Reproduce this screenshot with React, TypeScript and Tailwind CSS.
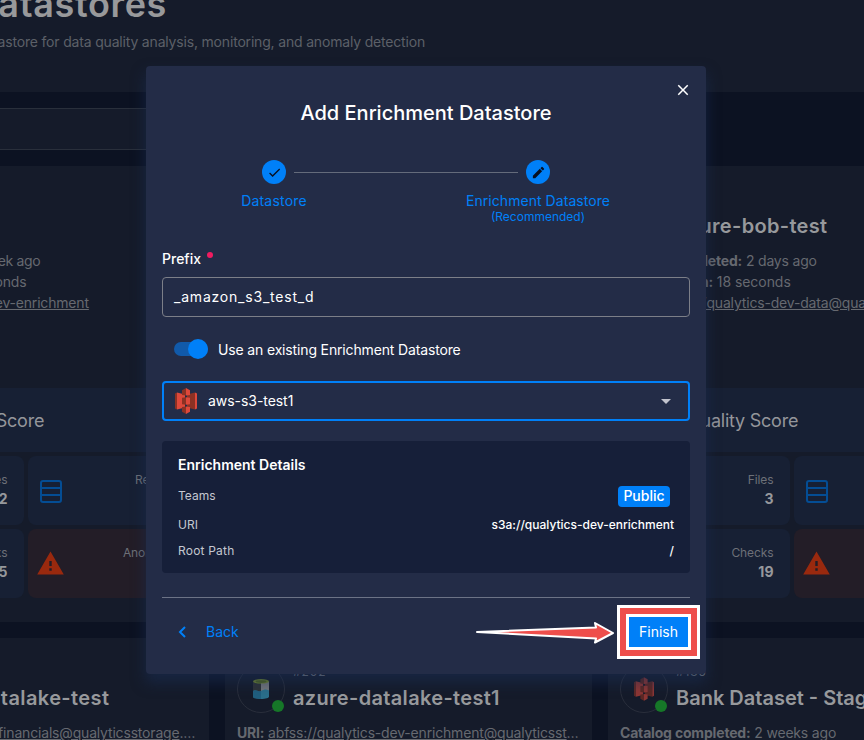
import { ReactNode } from "react";
import { MdCheck, MdEdit, MdClose, MdArrowDropDown, MdWarning } from "react-icons/md";

function S3Icon({ className }: { className: string }) {
  return (
    <svg viewBox="0 0 22 26" className={className}>
      <path d="M0 5.500 2 4.500v17l-2-1z" fill="#8c3123" />
      <path d="M2 4.500 10 6.500v13L2 21.500z" fill="#dd483b" />
      <path d="M22 5.500 20 4.500v17l2-1z" fill="#dd483b" />
      <path d="M20 4.500 12 6.500v13l8 2z" fill="#8c3123" />
      <path d="M7 2.200 11 0v7.500L7 7z" fill="#8c3123" />
      <path d="M15 2.200 11 0v7.500l4-.5z" fill="#dd483b" />
      <path d="M7 23.800 11 26v-7.500l-4 .5z" fill="#8c3123" />
      <path d="M15 23.800 11 26v-7.500l4 .5z" fill="#dd483b" />
      <path d="M7 9.800 11 9.300v7.500l-4-.6z" fill="#8c3123" />
      <path d="M15 9.800 11 9.300v7.500l4-.6z" fill="#dd483b" />
    </svg>
  );
}

function LakeIcon() {
  return (
    <svg viewBox="0 0 16 20" className="h-5 w-4">
      <path d="M0 2.500h8V19c-4 0-8-.5-8-2z" fill="#2e3236" />
      <path d="M8 2.500h8V17c0 1.500-4 2-8 2z" fill="#74777c" />
      <path d="M0 12c3-2 5 1.500 8 0s5-2 8-.5V17.500c0 1.500-3 2.500-8 2.500s-8-1-8-2.500z" fill="#2b6f8b" />
      <path d="M0 12c3-2 5 1.500 8 0v8c-5 0-8-1-8-2.500z" fill="#205f7f" />
      <ellipse cx="8" cy="2.300" rx="8" ry="2.300" fill="#71852c" />
      <ellipse cx="8" cy="2.600" rx="5.500" ry="1.300" fill="#4f6420" />
    </svg>
  );
}

function TableIcon() {
  return (
    <svg viewBox="0 0 22 23" className="mt-px h-[23px] w-[22px]" fill="none" stroke="#044d94" strokeWidth="2">
      <rect x="1" y="1" width="20" height="21" rx="2" />
      <path d="M1 8h20M1 15h20" />
    </svg>
  );
}

type TileProps = { icon?: ReactNode; label: string; value: string; tone: string };

function Tile({ icon, label, value, tone }: TileProps) {
  return (
    <div className={`flex h-[69px] items-center justify-between rounded-lg ${tone}`}>
      <span>{icon}</span>
      <div className="-mt-[2px] text-right">
        <div className="text-[12px] leading-[18px] tracking-[-0.1px] text-[#6d7078]">{label}</div>
        <div className="text-[14px] leading-5 font-bold text-[#96989c]">{value}</div>
      </div>
    </div>
  );
}

type CardProps = {
  id: string;
  title: string;
  titleClass?: string;
  scoreClass?: string;
  icon: ReactNode;
  rows: ReactNode;
  files?: string;
  checks?: string;
};

function Card({
  id,
  title,
  titleClass = "tracking-[0.33px]",
  scoreClass = "pl-[79px]",
  icon,
  rows,
  files = "1",
  checks = "4",
}: CardProps) {
  return (
    <section className="h-[456px] overflow-hidden bg-[#151b2a] whitespace-nowrap">
      <div className="flex h-[84px] gap-2 pt-[27px] pl-3">
        <div className="relative flex size-12 shrink-0 items-center justify-center rounded-full border border-[#292e3b]">
          {icon}
          <i className="absolute right-0 bottom-0 size-3 rounded-full bg-[#167728]" />
        </div>
        <div>
          <div className="h-[18px] text-[12px] leading-[14px] tracking-[0.9px] text-[#777a80]">{id}</div>
          <div className={`text-[20px] leading-[30px] font-semibold text-[#97999c] ${titleClass}`}>{title}</div>
        </div>
      </div>
      <div className="h-[138px] pl-3 text-[14px] leading-[21px] tracking-[-0.18px] text-[#666970]">{rows}</div>
      <div className={`h-16 bg-[#172034] text-[18px] leading-[66px] tracking-[-0.24px] text-[#94969b] ${scoreClass}`}>
        Quality Score
      </div>
      <div className="grid grid-cols-2 gap-1 p-1">
        <Tile label="Files" value={files} tone="bg-[#172034] pr-4" />
        <Tile label="Records" value="10K" tone="bg-[#172034] pl-3 pr-6" icon={<TableIcon />} />
        <Tile label="Checks" value={checks} tone="bg-[#172034] pr-4" />
        <Tile
          label="Anomalies"
          value="12"
          tone="bg-[#231d27] pl-2 pr-6"
          icon={<MdWarning className="size-[29px] text-[#99290e]" />}
        />
      </div>
    </section>
  );
}

function Row({ label, children }: { label: string; children: ReactNode }) {
  return (
    <div>
      <b className="font-bold">{label}</b> {children}
    </div>
  );
}

function Background() {
  return (
    <div className="absolute inset-0 overflow-hidden">
      <div className="-ml-[158px] w-[1133px]">
        <header className="h-[92px] bg-[#151b2a] whitespace-nowrap">
          <div className="flex h-8 w-[325px] justify-end text-[36px] leading-[8px] font-semibold tracking-[0.65px] text-[#98999b]">
            Datastores
          </div>
          <div className="flex w-[583px] justify-end text-[14px] leading-5 tracking-[-0.18px] text-[#5c6068]">
            Add a datastore for data quality analysis, monitoring, and anomaly detection
          </div>
        </header>
        <div className="h-[74px] pt-4">
          <div className="h-[42px] w-[700px] border border-[#292f3b] bg-[#151b2a]" />
        </div>
        <main className="grid grid-cols-[367px_367px_367px] gap-4">
          <Card
            id="#301"
            title="aws-s3"
            icon={<S3Icon className="h-6 w-5 opacity-60" />}
            scoreClass="pl-[91px]"
            files="12"
            checks="65"
            rows={
              <>
                <Row label="Scan completed:"><span className="tracking-[-0.35px]">1 week ago</span></Row>
                <Row label="Completed in:">20 seconds</Row>
                <Row label="URI:"><u>s3a://qualytics-dev-enrichment</u></Row>
              </>
            }
          />
          <Card id="#300" title="aws-s3" icon={<LakeIcon />} rows={null} />
          <Card
            id="#25"
            title="azure-bob-test"
            icon={<LakeIcon />}
            files="3"
            checks="19"
            rows={
              <>
                <Row label="Profile completed:">2 days ago</Row>
                <Row label="Completed in:"><span className="tracking-[-0.05px]">18 seconds</span></Row>
                <Row label="URI:"><u>wasbs://qualytics-dev-data@qualyticsstorage</u></Row>
              </>
            }
          />
          <Card
            id="#203"
            title="azure-datalake-test"
            titleClass="tracking-[0.4px]"
            icon={<LakeIcon />}
            rows={<Row label="URI:"><u>abfss://qualytics-financials@qualyticsstorage</u>.…</Row>}
          />
          <Card
            id="#202"
            title="azure-datalake-test1"
            icon={<LakeIcon />}
            rows={<Row label="URI:"><u>abfss://qualytics-dev-enrichment@qualyticsst</u>…</Row>}
          />
          <Card
            id="#135"
            title="Bank Dataset - Staging"
            titleClass=""
            icon={<S3Icon className="h-6 w-5 opacity-60" />}
            rows={<Row label="Catalog completed:">2 weeks ago</Row>}
          />
        </main>
      </div>
    </div>
  );
}

function Modal() {
  return (
    <div className="absolute top-[66px] left-[146px] h-[608px] w-[560px] rounded bg-[#232c47] px-4 text-white shadow-[0_8px_14px_1px_rgba(26,46,84,0.55)]">
      <div className="flex h-8 items-end justify-end">
        <MdClose className="-mr-[2px] -mb-px size-[18px]" />
      </div>
      <h1 className="h-[62px] text-center text-[20px] leading-[30px] font-medium">Add Enrichment Datastore</h1>
      <div className="flex h-[86px] justify-center pr-10 text-center text-[#0080f8]">
        <div className="flex w-[152px] flex-col items-center">
          <span className="flex size-6 items-center justify-center rounded-full bg-[#0080f8] text-[#071022]">
            <MdCheck className="size-[15px]" />
          </span>
          <span className="mt-[7px] text-[14px] leading-5 tracking-[0.2px]">Datastore</span>
        </div>
        <div className="-mx-14 mt-3 h-px w-[224px] shrink-0 bg-[#646b7b]" />
        <div className="flex w-[152px] flex-col items-center">
          <span className="flex size-6 items-center justify-center rounded-full bg-[#0080f8] text-[#071022]">
            <MdEdit className="size-[15px]" />
          </span>
          <span className="mt-[7px] text-[14px] leading-5 tracking-[0.05px]">Enrichment Datastore</span>
          <span className="text-[12px] leading-3">(Recommended)</span>
        </div>
      </div>
      <label className="flex h-[31px] gap-[6px] pt-[3px] text-[14px] leading-5 font-medium">
        Prefix <i className="mt-[3px] size-[6px] rounded-full bg-[#f01b60]" />
      </label>
      <div className="flex h-10 items-center rounded border border-[#7c7f88] px-[11px] pb-[2px] text-[14px] tracking-[0.79px]">_amazon_s3_test_d</div>
      <div className="flex h-16 items-center pl-3 text-[14px]">
        <span className="flex h-[14px] w-[34px] items-center justify-end rounded-full bg-[#115aaa]">
          <i className="size-5 shrink-0 rounded-full bg-[#0080f8]" />
        </span>
        <span className="ml-[10px] tracking-[-0.15px]">Use an existing Enrichment Datastore</span>
      </div>
      <div className="flex h-10 items-center rounded border-2 border-[#0080f8] pr-[10px] pl-[11px] text-[14px]">
        <S3Icon className="h-[26px] w-[22px]" />
        <span className="ml-[11px] pb-[2px] tracking-[-0.05px]">aws-s3-test1</span>
        <MdArrowDropDown className="ml-auto size-6 text-[#c2c3cd]" />
      </div>
      <section className="mt-5 h-[132px] rounded bg-[#161f39] px-4 pt-[14px] text-[12px]">
        <h2 className="h-[31px] text-[14px] leading-5 font-semibold">Enrichment Details</h2>
        <div className="flex h-[21px] items-center justify-between text-[#c4c7d0]">
          <span className="pb-[2px]">Teams</span>
          <span className="mr-1 flex h-[21px] w-[52px] items-center justify-center rounded bg-[#0080f8] pb-[2px] text-[14px] font-medium text-white">Public</span>
        </div>
        <div className="mt-[5px] flex h-[26px] items-center justify-between text-[#c4c7d0]">
          URI <b className="font-medium text-white">s3a://qualytics-dev-enrichment</b>
        </div>
        <div className="flex h-[26px] items-center justify-between text-[#c4c7d0]">
          <span className="tracking-[0.2px]">Root Path</span> <b className="font-medium text-white">/</b>
        </div>
      </section>
      <footer className="mt-6 flex border-t border-[#6c7386] text-[14px]">
        <button className="mt-[18px] flex h-8 items-center pl-4 text-[#0080f8]">
          <svg viewBox="0 0 8 12" className="h-3 w-2" fill="none" stroke="currentColor" strokeWidth="2">
            <path d="M7 1 2 6l5 5" />
          </svg>
          <span className="ml-5 pb-[2px]">Back</span>
        </button>
        <svg viewBox="0 0 142 24" className="mt-[23px] ml-[235px] h-6 w-[142px] shrink-0">
          <path d="M3 11 122 6.500 121 2 139 12 121 21.500 122 17.500Z" fill="#ee4e4b" stroke="white" strokeWidth="2" strokeLinejoin="round" />
        </svg>
        <button className="mt-[7px] -mr-[10px] ml-auto h-[54px] w-[83px] shrink-0 border-3 border-white bg-[#ee4e4b] p-[6px]">
          <span className="flex h-full items-center justify-center border-3 border-white bg-[#0080f8] pb-px">Finish</span>
        </button>
      </footer>
    </div>
  );
}

export default function App() {
  return (
    <div className="relative h-[740px] w-[864px] overflow-hidden bg-[#0c1222] font-['Inter',sans-serif]">
      <Background />
      <Modal />
    </div>
  );
}
